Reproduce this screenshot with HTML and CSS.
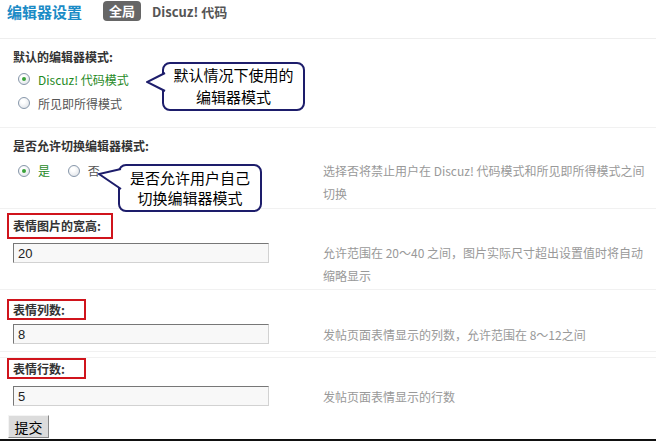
FILE: index.html
```html
<!DOCTYPE html>
<html lang="zh-CN">
<head>
    <meta charset="UTF-8">
    <meta name="viewport" content="width=device-width, initial-scale=1.0">
    <title>编辑器设置</title>
    <link rel="stylesheet" href="styles.css">
</head>
<body>
    <div class="page">
        <div class="head">
            <h1>编辑器设置</h1>
            <span class="badge">全局</span>
            <span class="crumb">Discuz! 代码</span>
        </div>

        <div class="row row-mode">
            <div class="label">默认的编辑器模式:</div>
            <div class="choice on"><span class="radio checked"></span>Discuz! 代码模式</div>
            <div class="choice"><span class="radio"></span>所见即所得模式</div>
        </div>

        <div class="row row-switch">
            <div class="label">是否允许切换编辑器模式:</div>
            <div class="value">
                <div class="field">
                    <span class="choice on"><span class="radio checked"></span>是</span>
                    <span class="choice"><span class="radio"></span>否</span>
                </div>
                <div class="tip">选择否将禁止用户在 Discuz! 代码模式和所见即所得模式之间切换</div>
            </div>
        </div>

        <div class="row row-size">
            <div class="label marked"><span class="mark mark-big">表情图片的宽高:</span></div>
            <div class="value">
                <div class="field"><input class="text" type="text" value="20"></div>
                <div class="tip">允许范围在 20～40 之间，图片实际尺寸超出设置值时将自动缩略显示</div>
            </div>
        </div>

        <div class="row row-cols">
            <div class="label marked"><span class="mark">表情列数:</span></div>
            <div class="value">
                <div class="field"><input class="text" type="text" value="8"></div>
                <div class="tip">发帖页面表情显示的列数，允许范围在 8～12之间</div>
            </div>
        </div>

        <div class="row row-lines">
            <div class="label marked"><span class="mark">表情行数:</span></div>
            <div class="value">
                <div class="field"><input class="text" type="text" value="5"></div>
                <div class="tip">发帖页面表情显示的行数</div>
            </div>
            <button class="submit">提交</button>
        </div>

        <!-- callouts over the form -->
        <div class="bubble bubble-mode">
            <svg class="tail" width="20" height="22" viewBox="0 0 20 22">
                <polygon points="20,1 1,10 20,19" fill="#fff"/>
                <polyline points="19,1 1,10 19,19" fill="none" stroke="#1d1d6b" stroke-width="2" stroke-linejoin="miter"/>
            </svg>
            默认情况下使用的<br>编辑器模式
        </div>
        <div class="bubble bubble-switch">
            <svg class="tail" width="24" height="26" viewBox="0 0 24 26">
                <polygon points="24,3 1,8 24,23" fill="#fff"/>
                <polyline points="23,3 1,8 23,23" fill="none" stroke="#1d1d6b" stroke-width="2" stroke-linejoin="miter"/>
            </svg>
            是否允许用户自己<br>切换编辑器模式
        </div>
    </div>
</body>
</html>
```

FILE: styles.css
```css
body {
    margin: 0;
    font-family: "Noto Sans CJK SC", "Noto Sans", sans-serif;
    font-size: 12px;
    color: #333;
    background: #fff;
}
.page {
    position: relative;
    height: 439px;
    border-bottom: 2px solid #111;
    overflow: hidden;
}

/* title bar */
.head {
    display: flex;
    align-items: center;
    height: 20px;
    padding: 1px 0 17px 7px;
    border-bottom: 1px solid #eee;
}
.head h1 {
    margin: 0;
    font-size: 15px;
    font-weight: bold;
    color: #1b8bc6;
}
.badge {
    margin-left: 21px;
    padding: 0 6px;
    height: 20px;
    line-height: 20px;
    border-radius: 4px;
    background: #666;
    color: #fff;
    font-size: 13px;
    font-weight: bold;
}
.crumb {
    margin-left: 11px;
    font-size: 13px;
    font-weight: bold;
    color: #555;
}

/* setting rows */
.row {
    border-bottom: 1px solid #f1f1f1;
}
.label {
    padding-left: 13px;
    line-height: 20px;
    font-weight: bold;
    color: #333;
}
.label.marked {
    padding-left: 7px;
}
.mark {
    display: inline-block;
    box-sizing: border-box;
    width: 79px;
    padding-left: 4px;
    line-height: 17px;
    border: 2px solid #d0141c;
}
.mark-big {
    width: 106px;
    padding: 2px 0 2px 4px;
    line-height: 18px;
}
.value {
    display: flex;
    align-items: flex-start;
}
.field {
    width: 323px;
    flex-shrink: 0;
    box-sizing: border-box;
    padding-left: 13px;
}
.tip {
    flex: 1;
    padding-right: 5px;
    line-height: 23px;
    color: #999;
}

.choice {
    display: flex;
    align-items: center;
    height: 24px;
    padding-left: 18px;
    color: #555;
}
.choice.on {
    color: #1f8a1f;
}
.field .choice {
    display: inline-flex;
    height: 23px;
    padding-left: 5px;
    margin-right: 10px;
}
.radio {
    position: relative;
    width: 10px;
    height: 10px;
    margin-right: 8px;
    border: 1px solid #8797aa;
    border-radius: 50%;
    background: radial-gradient(circle at 40% 35%, #fff 20%, #d9dde3 100%);
}
.radio.checked::after {
    content: "";
    position: absolute;
    left: 3px;
    top: 3px;
    width: 4px;
    height: 4px;
    border-radius: 50%;
    background: #3aa23a;
}

.text {
    display: block;
    box-sizing: border-box;
    width: 256px;
    height: 20px;
    margin: 0;
    padding: 0 4px;
    border: 1px solid #d2d2d2;
    border-top-color: #777;
    border-left-color: #777;
    background: #f8f8f8;
    font-family: "Liberation Sans", sans-serif;
    font-size: 13px;
    color: #222;
}

.row-mode .label { padding-top: 8px; }
.row-mode { padding-bottom: 12px; }

.row-switch .label { padding-top: 8px; }
.row-switch .value { margin-top: 3px; }
.row-switch { padding-bottom: 3px; }

.row-size .label { padding-top: 4px; }
.row-size .value { margin-top: 2px; }
.row-size .text { margin-top: 2px; }
.row-size { padding-bottom: 2px; }

.row-cols .label { padding-top: 9px; }
.row-cols .value { margin-top: 3px; }
.row-cols .text { margin-top: 1px; }
.row-cols { padding-bottom: 5px; }

.row-lines {
    margin-top: 5px;
    border-top: 1px solid #f1f1f1;
    border-bottom: 0;
}
.row-lines .value { margin-top: 6px; }
.row-lines .text { margin-top: 1px; }

.submit {
    display: block;
    width: 41px;
    height: 23px;
    margin: 7px 0 0 8px;
    padding: 0;
    border: 1px solid #888;
    border-top-color: #f4f4f4;
    border-left-color: #f4f4f4;
    background: #dcdcdc;
    font-family: "Noto Sans CJK SC", sans-serif;
    font-size: 14px;
    line-height: 20px;
    color: #000;
}

/* callout bubbles */
.bubble {
    position: absolute;
    box-sizing: border-box;
    border: 2px solid #1d1d6b;
    border-radius: 8px;
    background: #fff;
    color: #000;
    font-size: 15px;
    text-align: center;
}
.bubble .tail {
    position: absolute;
    display: block;
}
.bubble-mode {
    left: 162px;
    top: 62px;
    width: 143px;
    height: 49px;
    line-height: 22px;
}
.bubble-mode .tail {
    left: -18px;
    top: 8px;
}
.bubble-switch {
    left: 118px;
    top: 164px;
    width: 144px;
    height: 48px;
    padding-top: 2px;
    line-height: 20px;
}
.bubble-switch .tail {
    left: -22px;
    top: 0;
}
```
